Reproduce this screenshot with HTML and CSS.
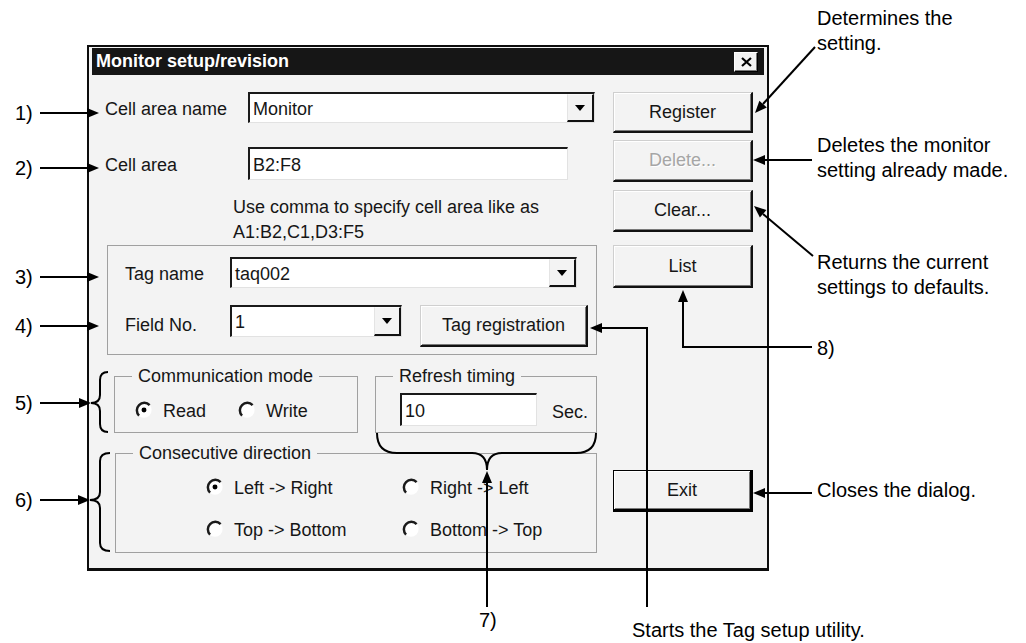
FILE: index.html
```html
<!DOCTYPE html>
<html lang="en">
<head>
    <meta charset="UTF-8">
    <meta name="viewport" content="width=device-width, initial-scale=1.0">
    <title>Monitor setup/revision</title>
    <link rel="stylesheet" href="styles.css">
</head>
<body>
<div class="figure">
    <div class="dialog">
        <div class="titlebar">
            <span class="title">Monitor setup/revision</span>
            <span class="close-btn">
                <svg width="11" height="10" viewBox="0 0 11 10"><path d="M1 1L10 9M10 1L1 9" stroke="#000" stroke-width="2.2"/></svg>
            </span>
        </div>

        <div class="dialog-body">
            <div class="main-col">
                <div class="field-row row-name">
                    <label class="field-label">Cell area name</label>
                    <div class="combo combo-name"><span class="combo-text">Monitor</span><span class="drop"></span></div>
                </div>

                <div class="field-row row-area">
                    <label class="field-label">Cell area</label>
                    <div class="textbox textbox-area">B2:F8</div>
                </div>

                <p class="hint">Use comma to specify cell area like as<br>A1:B2,C1,D3:F5</p>

                <div class="group group-tag">
                    <div class="tag-row">
                        <label class="tag-label">Tag name</label>
                        <div class="combo combo-tag"><span class="combo-text">taq002</span><span class="drop"></span></div>
                    </div>
                    <div class="tag-row field-no-row">
                        <label class="tag-label">Field No.</label>
                        <div class="combo combo-field"><span class="combo-text">1</span><span class="drop"></span></div>
                        <button class="btn btn-tagreg">Tag registration</button>
                    </div>
                </div>

                <div class="group-row">
                    <fieldset class="group group-comm">
                        <legend>Communication mode</legend>
                        <div class="radio-row">
                            <label class="opt">
                                <svg class="radio" width="18" height="18" viewBox="0 0 16 16"><circle cx="8" cy="8" r="6.8" fill="#fff"/><path d="M3.6 13A6.6 6.6 0 0 1 13 3.6" fill="none" stroke="#1a1a1a" stroke-width="2.2"/><circle cx="8" cy="8" r="2.2" fill="#000"/></svg>
                                Read
                            </label>
                            <label class="opt opt-write">
                                <svg class="radio" width="18" height="18" viewBox="0 0 16 16"><circle cx="8" cy="8" r="6.8" fill="#fff"/><path d="M3.6 13A6.6 6.6 0 0 1 13 3.6" fill="none" stroke="#1a1a1a" stroke-width="2.2"/></svg>
                                Write
                            </label>
                        </div>
                    </fieldset>

                    <fieldset class="group group-refresh">
                        <legend>Refresh timing</legend>
                        <div class="refresh-row">
                            <div class="textbox textbox-refresh">10</div>
                            <span class="unit">Sec.</span>
                        </div>
                    </fieldset>
                </div>

                <fieldset class="group group-dir">
                    <legend>Consecutive direction</legend>
                    <div class="dir-grid">
                        <label class="opt">
                            <svg class="radio" width="18" height="18" viewBox="0 0 16 16"><circle cx="8" cy="8" r="6.8" fill="#fff"/><path d="M3.6 13A6.6 6.6 0 0 1 13 3.6" fill="none" stroke="#1a1a1a" stroke-width="2.2"/><circle cx="8" cy="8" r="2.2" fill="#000"/></svg>
                            Left -&gt; Right
                        </label>
                        <label class="opt">
                            <svg class="radio" width="18" height="18" viewBox="0 0 16 16"><circle cx="8" cy="8" r="6.8" fill="#fff"/><path d="M3.6 13A6.6 6.6 0 0 1 13 3.6" fill="none" stroke="#1a1a1a" stroke-width="2.2"/></svg>
                            Right -&gt; Left
                        </label>
                        <label class="opt">
                            <svg class="radio" width="18" height="18" viewBox="0 0 16 16"><circle cx="8" cy="8" r="6.8" fill="#fff"/><path d="M3.6 13A6.6 6.6 0 0 1 13 3.6" fill="none" stroke="#1a1a1a" stroke-width="2.2"/></svg>
                            Top -&gt; Bottom
                        </label>
                        <label class="opt">
                            <svg class="radio" width="18" height="18" viewBox="0 0 16 16"><circle cx="8" cy="8" r="6.8" fill="#fff"/><path d="M3.6 13A6.6 6.6 0 0 1 13 3.6" fill="none" stroke="#1a1a1a" stroke-width="2.2"/></svg>
                            Bottom -&gt; Top
                        </label>
                    </div>
                </fieldset>
            </div>

            <div class="side-col">
                <button class="btn">Register</button>
                <button class="btn btn-delete" disabled>Delete...</button>
                <button class="btn btn-clear">Clear...</button>
                <button class="btn btn-list">List</button>
                <button class="btn btn-exit">Exit</button>
            </div>
        </div>
    </div>

    <!-- callout lines, braces and arrowheads drawn over the dialog -->
    <svg class="callouts" width="1026" height="643" viewBox="0 0 1026 643">
        <g stroke="#000" stroke-width="2" fill="none">
            <path d="M40 113H88M40 168H88M40 277H88M40 326H88M40 403H80M40 500H79"/>
            <path d="M108 372Q100 372 100 380V395Q100 403 91 403Q100 403 100 411V424Q100 432 108 432"/>
            <path d="M110 453Q100 453 100 461V492Q100 500 90 500Q100 500 100 508V543Q100 551 110 551"/>
            <path d="M377 433Q377 453 397 453H472Q487 453 487 470Q487 453 502 453H576Q596 453 596 433"/>
            <path d="M815 47L763 104"/>
            <path d="M812 160H764"/>
            <path d="M813 256L763 214"/>
            <path d="M812 347H683V302"/>
            <path d="M647 607V328H602"/>
            <path d="M812 493H765"/>
            <path d="M487 607V483"/>
        </g>
        <g fill="#000">
            <polygon points="99,113 87,108 87,118"/>
            <polygon points="99,168 87,163 87,173"/>
            <polygon points="99,277 87,272 87,282"/>
            <polygon points="99,326 87,321 87,331"/>
            <polygon points="91,403 79,398 79,408"/>
            <polygon points="90,500 78,495 78,505"/>
            <polygon points="755,113 766.8,107.5 759.4,100.7"/>
            <polygon points="753,160 765,155 765,165"/>
            <polygon points="754,206 766.4,210 759.9,217.6"/>
            <polygon points="683,290 678,302 688,302"/>
            <polygon points="590,328 602,323 602,333"/>
            <polygon points="753,493 765,488 765,498"/>
            <polygon points="487,471 482,483 492,483"/>
        </g>
    </svg>

    <div class="note num num-1">1)</div>
    <div class="note num num-2">2)</div>
    <div class="note num num-3">3)</div>
    <div class="note num num-4">4)</div>
    <div class="note num num-5">5)</div>
    <div class="note num num-6">6)</div>
    <div class="note note-seven">7)</div>
    <div class="note note-register">Determines the<br>setting.</div>
    <div class="note note-delete">Deletes the monitor<br>setting already made.</div>
    <div class="note note-clear">Returns the current<br>settings to defaults.</div>
    <div class="note note-list">8)</div>
    <div class="note note-exit">Closes the dialog.</div>
    <div class="note note-tag">Starts the Tag setup utility.</div>
</div>
</body>
</html>
```

FILE: styles.css
```css
* {
    box-sizing: border-box;
}

body {
    margin: 0;
    background: #fff;
    font-family: "Liberation Sans", Arial, sans-serif;
    color: #161616;
}

fieldset {
    margin: 0;
    min-width: 0;
}

.figure {
    position: relative;
    width: 1026px;
    height: 643px;
    padding: 45px 0 0 87px;
    overflow: hidden;
}

/* dialog window */
.dialog {
    width: 682px;
    height: 526px;
    border: 2px solid #0d0d0d;
    border-bottom-width: 3px;
    padding: 1px 3px 0 3px;
    background: #f3f3f3;
    font-size: 18px;
}

.titlebar {
    height: 27px;
    background: #161616;
    display: flex;
    align-items: center;
    justify-content: space-between;
    padding: 0 6px 0 4px;
}

.title {
    color: #fff;
    font-weight: bold;
    font-size: 18px;
}

.close-btn {
    width: 24px;
    height: 20px;
    display: flex;
    align-items: center;
    justify-content: center;
    background: #f3f3f3;
    border: 1px solid;
    border-color: #fff #000 #000 #fff;
    box-shadow: inset -1px -1px 0 #777;
}

.dialog-body {
    display: flex;
    padding: 17px 11px 0 8px;
}

.main-col {
    width: 497px;
}

.side-col {
    width: 140px;
    margin-left: 16px;
    display: flex;
    flex-direction: column;
}

/* rows and fields */
.field-row {
    display: flex;
    align-items: center;
}

.row-name {
    height: 31px;
}

.row-area {
    height: 33px;
    margin-top: 24px;
}

.field-label {
    width: 148px;
    padding: 4px 0 0 5px;
}

.combo,
.textbox {
    height: 100%;
    background: #fff;
    border-style: solid;
    border-width: 2px 1px 1px 2px;
    border-color: #1a1a1a #e2e2e2 #e2e2e2 #1a1a1a;
}

.combo {
    display: flex;
}

.combo-text {
    flex: 1;
    padding: 3px 0 0 3px;
    line-height: 24px;
}

.drop {
    width: 27px;
    display: flex;
    align-items: center;
    justify-content: center;
    background: #f3f3f3;
    border-style: solid;
    border-width: 1px 2px 2px 1px;
    border-color: #fafafa #111 #111 #e4e4e4;
}

.drop::after {
    content: "";
    border-left: 5px solid transparent;
    border-right: 5px solid transparent;
    border-top: 6px solid #000;
}

.combo-name {
    width: 347px;
}

.textbox {
    display: flex;
    align-items: center;
    padding: 3px 0 0 3px;
}

.textbox-area {
    width: 320px;
}

.hint {
    margin: 15px 0 0 133px;
    line-height: 25px;
}

/* group boxes */
.group {
    border: 1px solid #a0a0a0;
}

legend {
    margin-left: 17px;
    padding: 0 6px;
    line-height: 20px;
    font-size: 18px;
}

.group-tag {
    width: 490px;
    height: 110px;
    margin-left: 7px;
    padding: 11px 0 0 17px;
}

.tag-row {
    display: flex;
    align-items: center;
    height: 31px;
}

.tag-label {
    width: 105px;
    padding-top: 4px;
}

.combo-tag {
    width: 347px;
}

.field-no-row {
    margin-top: 17px;
    height: 43px;
    align-items: flex-start;
}

.field-no-row .tag-label {
    line-height: 32px;
}

.combo-field {
    width: 172px;
    height: 32px;
}

.btn-tagreg {
    width: 168px;
    height: 43px;
    margin-left: 18px;
}

.group-row {
    display: flex;
    margin-top: 11px;
}

.group-comm {
    width: 244px;
    height: 67px;
    margin-left: 14px;
    padding: 12px 0 0 0;
}

.group-refresh {
    width: 222px;
    height: 67px;
    margin-left: 17px;
    padding: 7px 0 0 0;
}

.radio-row {
    display: flex;
    align-items: center;
    height: 24px;
    margin-left: 20px;
}

.opt {
    display: flex;
    align-items: center;
    gap: 10px;
    height: 24px;
    padding-top: 2px;
}

.radio {
    margin-top: -2px;
}

.opt-write {
    margin-left: 32px;
}

.refresh-row {
    display: flex;
    align-items: center;
    margin-left: 24px;
}

.textbox-refresh {
    width: 137px;
    height: 33px;
}

.unit {
    margin-left: 15px;
    padding-top: 6px;
}

.group-dir {
    width: 482px;
    height: 110px;
    margin-top: 10px;
    margin-left: 15px;
    padding: 12px 0 0 0;
}

.dir-grid {
    display: grid;
    grid-template-columns: 196px auto;
    row-gap: 18px;
    margin-left: 90px;
}

/* push buttons */
.btn {
    height: 42px;
    padding: 0;
    font: inherit;
    color: #161616;
    background: #f3f3f3;
    border-style: solid;
    border-width: 1px 2px 2px 1px;
    border-color: #cfcfcf #111 #111 #cfcfcf;
    box-shadow: inset 1px 1px 0 #fff, inset -1px -1px 0 #7a7a7a;
}

.side-col .btn:first-child {
    height: 41px;
}

.btn-delete {
    margin-top: 7px;
    color: #a6a6a6;
    text-shadow: 1px 1px 0 #fff;
}

.btn-clear {
    margin-top: 8px;
}

.btn-list {
    margin-top: 13px;
    height: 43px;
}

.btn-exit {
    margin-top: 182px;
    border: 1px solid #000;
    border-right-width: 3px;
    border-bottom-width: 3px;
}

/* callouts */
.callouts {
    position: absolute;
    top: 0;
    left: 0;
    pointer-events: none;
}

.note {
    position: absolute;
    font-size: 20px;
    line-height: 25px;
    color: #000;
    white-space: nowrap;
}

.num {
    left: 15px;
}

.num-1 { top: 101px; }
.num-2 { top: 156px; }
.num-3 { top: 265px; }
.num-4 { top: 314px; }
.num-5 { top: 391px; }
.num-6 { top: 488px; }

.note-seven {
    left: 479px;
    top: 608px;
}

.note-register {
    left: 817px;
    top: 6px;
}

.note-delete {
    left: 817px;
    top: 133px;
}

.note-clear {
    left: 817px;
    top: 250px;
}

.note-list {
    left: 817px;
    top: 336px;
}

.note-exit {
    left: 817px;
    top: 478px;
}

.note-tag {
    left: 632px;
    top: 618px;
}
```
